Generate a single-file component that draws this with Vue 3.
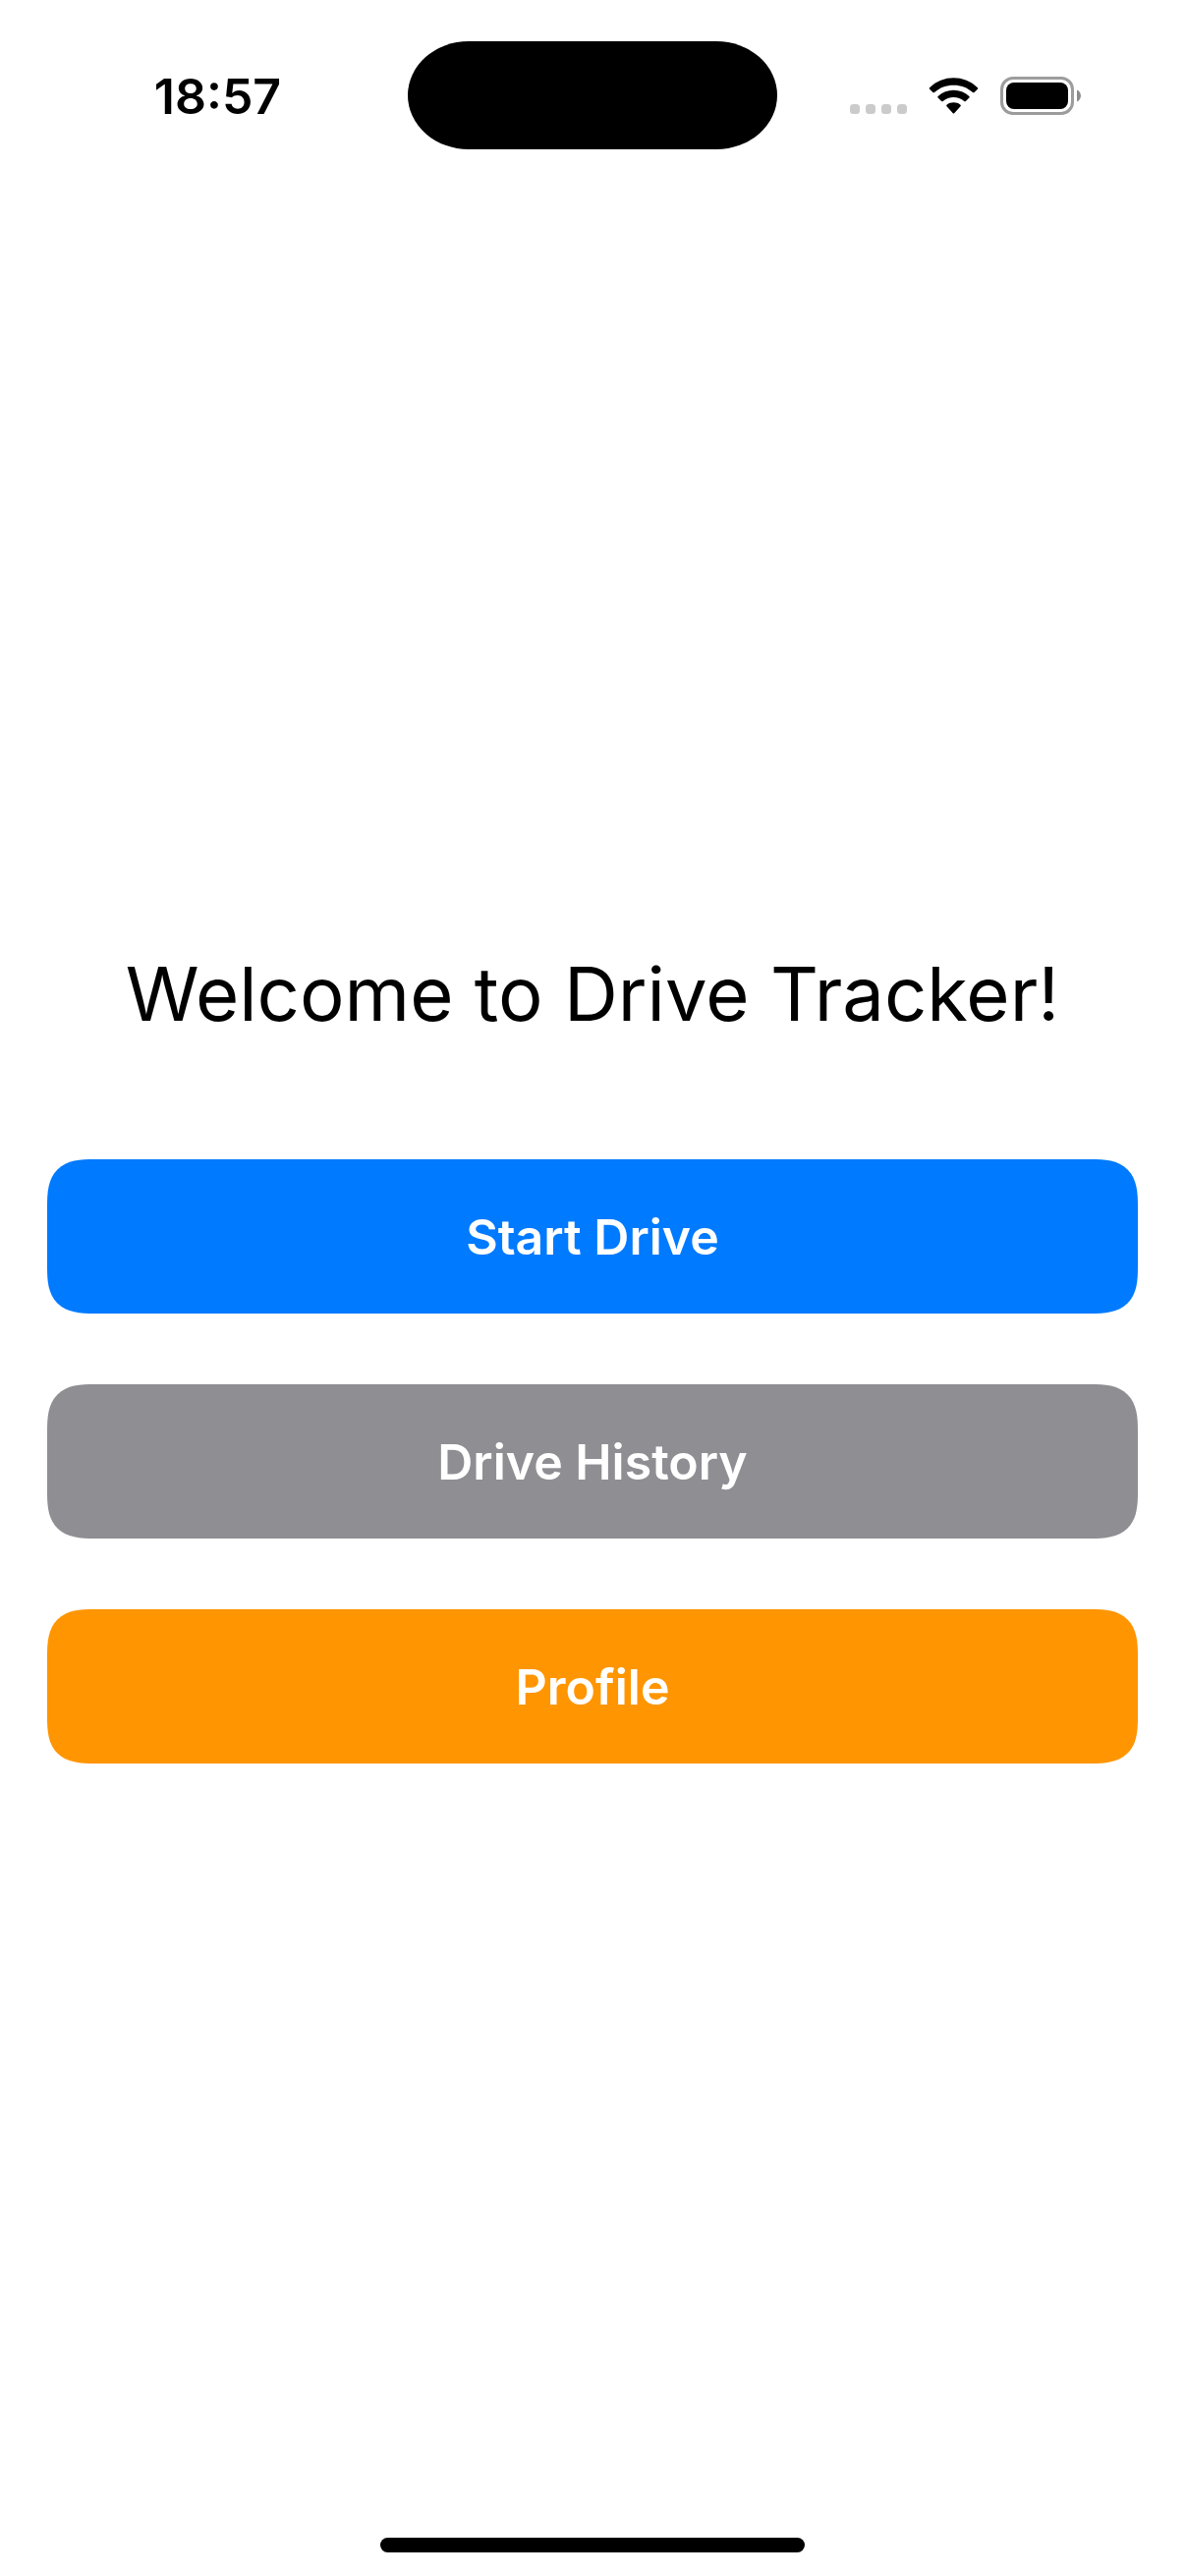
<script setup>
const actions = [
  { label: 'Start Drive', kind: 'start' },
  { label: 'Drive History', kind: 'history' },
  { label: 'Profile', kind: 'profile' },
]
</script>

<template>
  <div class="screen">
    <header class="status-bar">
      <time class="clock">18:57</time>
      <div class="island"></div>
      <div class="indicators">
        <svg width="236" height="40" viewBox="0 -1 236 40" aria-hidden="true">
          <g fill="#cbcbcb">
            <rect x="0" y="28" width="10" height="10" rx="3.5" />
            <rect x="16" y="28" width="10" height="10" rx="3.5" />
            <rect x="32" y="28" width="10" height="10" rx="3.5" />
            <rect x="48" y="28" width="10" height="10" rx="3.5" />
          </g>
          <g fill="#000">
            <path d="M81.1 11.2 Q80.3 12 81.1 12.8 L84.4 16 Q85.2 16.7 86 16 C96.5 6.2 114.500 6.200 125 16 Q125.800 16.700 126.600 16 L129.900 12.800 Q130.700 12 129.900 11.200 C116.500 -2.100 94.500 -2.100 81.100 11.200 Z" />
            <path d="M89.600 19.900 Q88.800 20.700 89.600 21.500 L93.100 25 Q93.900 25.600 94.700 25 C100.900 19.600 110.100 19.600 116.300 25 Q117.100 25.600 117.900 25 L121.400 21.500 Q122.200 20.700 121.400 19.900 C112.500 11.600 98.500 11.600 89.600 19.900 Z" />
            <path d="M98.500 28.700 Q97.700 29.500 98.500 30.300 L104.600 36.900 Q105.500 37.900 106.400 36.900 L112.500 30.300 Q113.300 29.500 112.500 28.700 C108.600 25.500 102.400 25.500 98.500 28.700 Z" />
          </g>
          <rect x="154.500" y="1.500" width="72" height="36" rx="11.500" fill="none" stroke="#9c9c9c" stroke-width="3" />
          <rect x="159" y="6" width="63" height="27" rx="8" fill="#000" />
          <path d="M231 13.500 C236.300 15.800 236.300 23.200 231 25.500 Z" fill="#8c8c8c" />
        </svg>
      </div>
    </header>

    <main class="content">
      <h1 class="title">Welcome to Drive Tracker!</h1>
      <button
        v-for="action in actions"
        :key="action.kind"
        type="button"
        class="action"
        :class="action.kind"
      >
        {{ action.label }}
      </button>
    </main>

    <footer class="home-area">
      <div class="home-indicator"></div>
    </footer>
  </div>
</template>

<style>
body {
  margin: 0;
  background: #fff;
}
</style>

<style scoped>
.screen {
  display: flex;
  flex-direction: column;
  min-height: 100vh;
  background: #fff;
  color: #000;
  font-family: Inter, "Liberation Sans", sans-serif;
}

.status-bar {
  display: grid;
  grid-template-columns: 1fr 376px 1fr;
  align-items: center;
  box-sizing: border-box;
  height: 186px;
  padding: 42px 0 34px;
}

.clock {
  padding: 2px 0 0 28px;
  font-size: 50px;
  font-weight: 600;
  line-height: 60px;
  text-align: center;
}

.island {
  height: 110px;
  border-radius: 62px / 55px;
  background: #000;
}

.indicators {
  display: flex;
  justify-content: center;
  padding-right: 32px;
}

.content {
  display: flex;
  flex: 1;
  flex-direction: column;
  justify-content: center;
  gap: 72px;
  padding: 0 48px;
}

.title {
  margin: 0;
  padding: 50px 0 46px;
  font-size: 76px;
  font-weight: 400;
  line-height: 101px;
  text-align: center;
}

.action {
  height: 157px;
  padding: 2px 48px 0;
  border: 0;
  border-radius: 38px;
  color: #fff;
  font-family: inherit;
  font-size: 50px;
  font-weight: 600;
  line-height: 61px;
  text-align: center;
}

@supports (corner-shape: superellipse(1.5)) {
  .action {
    border-radius: 48px;
    corner-shape: superellipse(1.5);
  }
}

.start {
  background: #007aff;
}

.history {
  background: #8e8e93;
}

.profile {
  background: #ff9500;
}

.home-area {
  display: flex;
  align-items: flex-end;
  justify-content: center;
  box-sizing: border-box;
  height: 102px;
  padding-bottom: 24px;
}

.home-indicator {
  width: 432px;
  height: 15px;
  border-radius: 8px;
  background: #000;
}
</style>
